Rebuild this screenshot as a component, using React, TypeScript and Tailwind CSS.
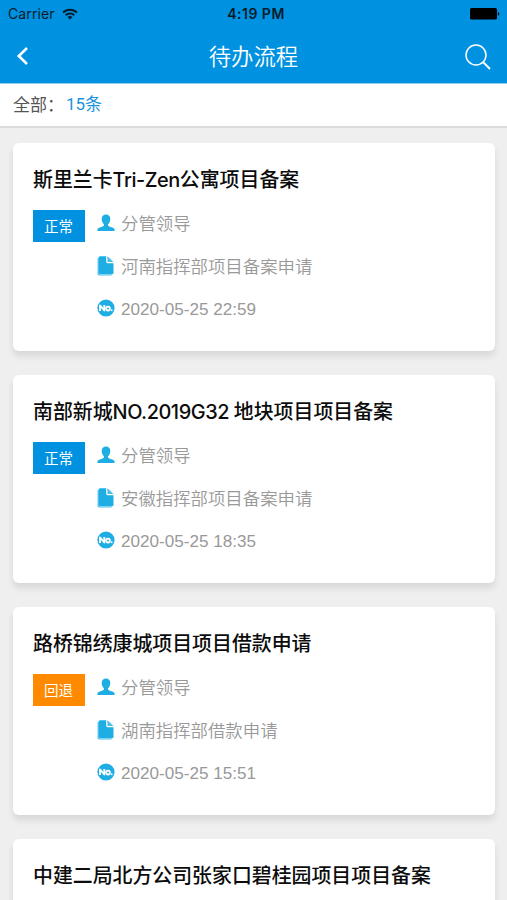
import React from 'react';

interface Flow {
  id: number;
  title: React.ReactNode;
  status?: '正常' | '回退';
  owner?: string;
  type?: string;
  time?: string;
}

const Latin = ({ children }: { children: React.ReactNode }) => (
  <span className="font-['Inter','Noto_Sans_CJK_SC',sans-serif] tracking-[-0.45px]">{children}</span>
);

const flows: Flow[] = [
  {
    id: 1,
    title: <>斯里兰卡<Latin>Tri-Zen</Latin>公寓项目备案</>,
    status: '正常',
    owner: '分管领导',
    type: '河南指挥部项目备案申请',
    time: '2020-05-25 22:59',
  },
  {
    id: 2,
    title: <>南部新城<Latin>NO.2019G32 </Latin>地块项目项目备案</>,
    status: '正常',
    owner: '分管领导',
    type: '安徽指挥部项目备案申请',
    time: '2020-05-25 18:35',
  },
  {
    id: 3,
    title: '路桥锦绣康城项目项目借款申请',
    status: '回退',
    owner: '分管领导',
    type: '湖南指挥部借款申请',
    time: '2020-05-25 15:51',
  },
  {
    id: 4,
    title: '中建二局北方公司张家口碧桂园项目项目备案',
  },
];

const WifiIcon = () => (
  <svg width="16" height="12" viewBox="0 0 16 12" fill="none" stroke="#061c2b" strokeWidth="2">
    <path d="M1.1 4.5a9.8 9.8 0 0 1 13.8 0" />
    <path d="M3.7 7.2a6.1 6.1 0 0 1 8.6 0" />
    <path d="M8 11.6 5.5 9.1a3.6 3.6 0 0 1 5 0z" fill="#061c2b" stroke="none" />
  </svg>
);

const BatteryIcon = () => (
  <svg width="30" height="12" viewBox="0 0 30 12" fill="#000">
    <rect x="0" y="0" width="27" height="11.6" rx="1.6" />
    <path d="M27.9 4.1c1.9.5 1.9 3.1 0 3.6z" />
  </svg>
);

const UserIcon = () => (
  <svg width="18" height="18" viewBox="0 0 18 18" fill="#1eaee3">
    <path d="M9 .6C6.5.6 4.7 2.3 4.7 4.9c0 2.2.9 4.1 2.2 5.3.3 1.1-.1 1.8-1.1 2.2L2 13.7C.8 14.1.4 14.9.3 16.5c0 .3.2.5.5.5h16.4c.3 0 .5-.2.5-.5-.1-1.6-.5-2.4-1.7-2.8l-3.8-1.3c-1-.4-1.4-1.1-1.1-2.2 1.3-1.2 2.2-3.1 2.2-5.3C13.3 2.3 11.5.6 9 .6z" />
  </svg>
);

const FileIcon = () => (
  <svg width="18" height="20" viewBox="0 0 18 20">
    <path d="M2 1.2A1.5 1.5 0 0 0 .6 2.7v15.4c0 .8.6 1.4 1.4 1.4h11.6c.8 0 1.3-.4 1.4-1H3.2c-.6 0-1.2-.5-1.2-1.2z" fill="#4fc0ea" />
    <path d="M3.2.2h6v5.6c0 .8.6 1.4 1.4 1.4h5.9v9.9c0 .7-.5 1.2-1.2 1.2H3.2c-.7 0-1.2-.5-1.2-1.2V1.4C2 .7 2.5.2 3.2.2z" fill="#1eaee3" />
    <path d="M10.4.4c.4.1.7.3 1 .6l4.4 4.2c.3.3.5.6.6.9h-5.4c-.4 0-.6-.2-.6-.6z" fill="#4fc0ea" />
  </svg>
);

const NoIcon = () => (
  <svg width="18" height="18" viewBox="0 0 18 18">
    <circle cx="9" cy="9" r="8.6" fill="#1eaee3" />
    <path d="M3 11.9V6.4l4.3 5.1V6.1" fill="none" stroke="#fff" strokeWidth="1.9" strokeLinejoin="round" />
    <circle cx="11" cy="9.6" r="1.9" fill="none" stroke="#fff" strokeWidth="1.8" />
    <circle cx="14.6" cy="11.3" r="1" fill="#fff" />
  </svg>
);

function InfoRow({ icon, children, latin }: { icon: React.ReactNode; children: React.ReactNode; latin?: boolean }) {
  return (
    <div className="flex h-[42.75px] items-center">
      <span className="flex w-6 shrink-0 pb-0.5">{icon}</span>
      <span
        className={
          latin
            ? "pt-px font-['Liberation_Sans',sans-serif] text-[17.1px] text-[#999]"
            : 'pb-0.5 text-[17.4px] font-[350] text-[#999]'
        }
      >
        {children}
      </span>
    </div>
  );
}

function FlowCard({ flow }: { flow: Flow }) {
  return (
    <article className="h-[208px] shrink-0 rounded-md bg-white px-5 pt-[21px] shadow-[0_5px_7px_rgba(0,0,0,0.10)]">
      <h2 className="h-[30px] text-[19.9px] leading-[30px] font-medium whitespace-nowrap text-[#0c0c0c]">{flow.title}</h2>
      {flow.status && (
        <div className="mt-[8.5px] flex items-start gap-3">
          <span
            className={`mt-[7.5px] flex h-8 w-[52px] items-center justify-center pr-px pb-px text-[14.5px] text-white ${
              flow.status === '回退' ? 'bg-[#ff8a00]' : 'bg-[#0092e0]'
            }`}
          >
            {flow.status}
          </span>
          <div>
            <InfoRow icon={<UserIcon />}>{flow.owner}</InfoRow>
            <InfoRow icon={<FileIcon />}>{flow.type}</InfoRow>
            <InfoRow icon={<NoIcon />} latin>{flow.time}</InfoRow>
          </div>
        </div>
      )}
    </article>
  );
}

export default function App() {
  return (
    <div className="flex h-[900px] w-[507px] flex-col overflow-hidden bg-[#efefef] font-['Noto_Sans_CJK_SC',sans-serif]">
      <header className="h-[84px] shrink-0 border-b border-[#8fd0f3] bg-[#0092e0]">
        {/* Barra de estado */}
        <div className="grid h-[27px] grid-cols-3 items-center pr-[7px] pl-2 font-['Inter',sans-serif] text-[14px] text-[#061c2b]">
          <div className="flex items-center gap-[7px]">
            <span className="tracking-[0.1px]">Carrier</span>
            <WifiIcon />
          </div>
          <span className="pl-1 text-center font-semibold tracking-[0.5px]">4:19 PM</span>
          <div className="flex justify-end">
            <BatteryIcon />
          </div>
        </div>
        <div className="grid h-[57px] grid-cols-3 items-center px-4">
          <svg width="13" height="18" viewBox="0 0 13 18" fill="none" stroke="#fff" strokeWidth="2.6">
            <path d="M11 1 2.8 9l8.2 8" />
          </svg>
          <h1 className="text-center text-[22.4px] font-[350] text-white">待办流程</h1>
          <svg className="mt-0.5 justify-self-end" width="26" height="26" viewBox="0 0 26 26" fill="none" stroke="#fff" strokeWidth="1.5">
            <circle cx="11" cy="11" r="10" />
            <path d="m18 18 7 7" strokeWidth="2" />
          </svg>
        </div>
      </header>

      <div className="flex h-[44px] shrink-0 items-center border-b-2 border-[#dcdcdc] bg-white pb-0.5 pl-[13px] text-[17px]">
        <span className="flex w-[53px] whitespace-nowrap text-[#555]">
          <span>全部</span>
          <span>：</span>
        </span>
        <span className="text-[#1a93dc]">
          <span className="font-['Roboto',sans-serif]">15</span>条
        </span>
      </div>

      <main className="flex flex-col gap-6 pt-[15px] pr-3 pl-[13px]">
        {flows.map((flow) => (
          <FlowCard key={flow.id} flow={flow} />
        ))}
      </main>
    </div>
  );
}
